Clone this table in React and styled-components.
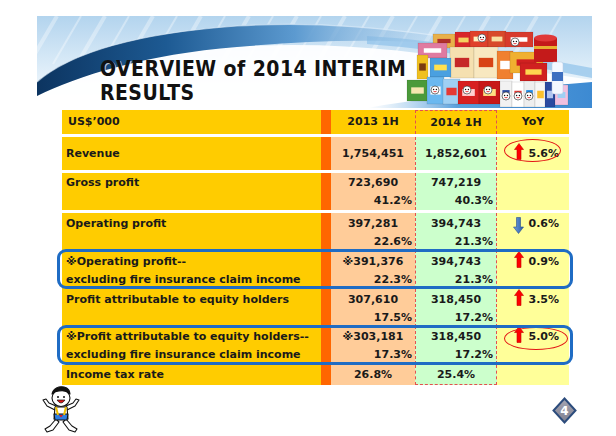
import styled, { createGlobalStyle } from "styled-components";

const GlobalStyle = createGlobalStyle`
  body {
    margin: 0;
    background: #fff;
  }
`;

const Slide = styled.div`
  width: 616px;
  height: 436px;
  box-sizing: border-box;
  padding-top: 16px;
  overflow: hidden;
`;

const Banner = styled.div`
  position: relative;
  margin-left: 37px;
  width: 555px;
  height: 92px;
`;

const BannerArt = styled.svg`
  position: absolute;
  inset: 0;
`;

const Title = styled.h1`
  position: relative;
  margin: 0;
  padding: 41px 0 0 63px;
  font: bold 21px/24px "DejaVu Sans Condensed", "DejaVu Sans", sans-serif;
  letter-spacing: 0.45px;
  color: #111;
  text-shadow: 1px 1px 0 rgba(255, 255, 255, 0.7);
`;

const Table = styled.div`
  display: flex;
  flex-direction: column;
  width: 507px;
  margin: 2px 0 0 62px;
  color: #1a1a1a;
  font: bold 11px/18px "DejaVu Sans", Verdana, sans-serif;
`;

const Row = styled.div`
  --pt: ${(p) => p.$pt}px;
  display: grid;
  grid-template-columns: 259px 10px 84px 82px 72px;
  height: ${(p) => p.$h}px;
  margin-top: ${(p) => p.$gap}px;
  position: ${(p) => (p.$boxed ? "relative" : "static")};

  ${(p) =>
    p.$boxed &&
    `
    &::after {
      content: "";
      position: absolute;
      top: -1px;
      bottom: -1px;
      left: -5px;
      right: -4px;
      border: 3px solid #1f6cc4;
      border-radius: 9px;
      z-index: 2;
      pointer-events: none;
    }
  `}
`;

const Label = styled.div`
  background: #ffcc00;
  padding: var(--pt) 0 0 ${(p) => (p.$head ? 6 : 4)}px;
  white-space: nowrap;
`;

const Stripe = styled.div`
  background: #ff6600;
`;

const HeadCell = styled.div`
  background: #ffcc00;
  padding-top: var(--pt);
  text-align: center;
  box-sizing: border-box;
  ${(p) =>
    p.$dashed &&
    `
    border: 1px dashed #e4504f;
    border-bottom: none;
  `}
`;

const Amount = styled.div`
  display: flex;
  flex-direction: column;
  box-sizing: border-box;
  padding-top: var(--pt);
  background: ${(p) => (p.$year === 2014 ? "#ccffcc" : "#ffcc99")};
  ${(p) =>
    p.$year === 2014 &&
    `
    border-left: 1px dashed #e4504f;
    border-right: 1px dashed #e4504f;
  `}
  ${(p) => p.$last && `border-bottom: 1px dashed #e4504f;`}
`;

const Value = styled.span`
  text-align: center;
  white-space: nowrap;
`;

const Pct = styled.span`
  text-align: right;
  padding-right: 3px;
`;

const Change = styled.div`
  position: relative;
  background: #ffff99;
  padding-top: var(--pt);
`;

const ChangeLine = styled.div`
  display: flex;
  align-items: center;
  justify-content: flex-end;
  gap: 4px;
  height: 18px;
  padding-right: 10px;
`;

const Ring = styled.span`
  position: absolute;
  left: 7px;
  top: ${(p) => p.$top}px;
  width: ${(p) => p.$w}px;
  height: 23px;
  box-sizing: border-box;
  border: 1.5px solid #e31515;
  border-radius: 50%;
`;

const ArrowIcon = styled.svg`
  flex: none;
  margin-top: ${(p) => (p.$up ? -5 : 3)}px;
`;

const Footer = styled.div`
  display: flex;
  justify-content: space-between;
  align-items: flex-start;
  padding: 0 39px 0 41px;
`;

const Mascot = styled.svg`
  margin-top: 1px;
`;

const PageBadge = styled.svg`
  margin-top: 12px;
`;

const UpArrow = () => (
  <ArrowIcon $up width="10" height="17" viewBox="0 0 10 17">
    <polygon
      points="5,0.5 9.5,6.5 7,6.5 7,16.5 3,16.5 3,6.5 0.5,6.5"
      fill="#ff0000"
      stroke="#c40000"
      strokeWidth="0.6"
    />
  </ArrowIcon>
);

const DownArrow = () => (
  <ArrowIcon width="11" height="17" viewBox="0 0 11 17">
    <defs>
      <linearGradient id="downFill" x1="0" y1="0" x2="1" y2="0">
        <stop offset="0" stopColor="#6f9fe0" />
        <stop offset="1" stopColor="#2b5ca6" />
      </linearGradient>
    </defs>
    <polygon
      points="3.5,0.5 7.5,0.5 7.5,10 10.5,10 5.5,16.5 0.5,10 3.5,10"
      fill="url(#downFill)"
      stroke="#2a4f8a"
      strokeWidth="0.6"
    />
  </ArrowIcon>
);

const rows = [
  { label: "Revenue", h: 33, gap: 3, pt: 8, y13: ["1,754,451"], y14: ["1,852,601"], yoy: { dir: "up", v: "5.6%", ring: { w: 57, top: 2 } } },
  { label: "Gross profit", h: 37, gap: 3, pt: 1, y13: ["723,690", "41.2%"], y14: ["747,219", "40.3%"] },
  { label: "Operating profit", h: 36, gap: 3, pt: 2, y13: ["397,281", "22.6%"], y14: ["394,743", "21.3%"], yoy: { dir: "down", v: "0.6%" } },
  { label: ["※Operating profit--", "excluding fire insurance claim income"], h: 38, gap: 1, pt: 3, boxed: true, y13: ["※391,376", "22.3%"], y14: ["394,743", "21.3%"], yoy: { dir: "up", v: "0.9%" } },
  { label: "Profit attributable to equity holders", h: 36, gap: 1, pt: 2, y13: ["307,610", "17.5%"], y14: ["318,450", "17.2%"], yoy: { dir: "up", v: "3.5%" } },
  { label: ["※Profit attributable to equity holders--", "excluding fire insurance claim income"], h: 38, gap: 1, pt: 2, boxed: true, y13: ["※303,181", "17.3%"], y14: ["318,450", "17.2%"], yoy: { dir: "up", v: "5.0%", ring: { w: 64, top: 1 } } },
  { label: "Income tax rate", h: 20, gap: 1, pt: 1, y13: ["26.8%"], y14: ["25.4%"], last: true },
];

// packages in the product photo: x, y, w, h, colour, label colour
const products = [
  [396, 18, 22, 14, "#e8b04a", "#b0302a"],
  [418, 16, 17, 16, "#d8262a", "#f4d060"],
  [433, 15, 18, 16, "#e0402a", "#fff2c0"],
  [451, 15, 18, 16, "#d84a2a", "#f8e0a0"],
  [468, 16, 28, 15, "#d83a2c", "#ffffff"],
  [381, 27, 29, 15, "#e07aa0", "#ffffff"],
  [413, 31, 24, 31, "#f5e0b0", "#c62828"],
  [437, 31, 24, 31, "#f8e8c0", "#d84315"],
  [393, 42, 21, 19, "#4aa0e0", "#ffe14d"],
  [460, 35, 16, 28, "#f08030", "#ffffff"],
  [473, 36, 33, 21, "#f0b030", "#d02020"],
  [483, 47, 27, 18, "#d02020", "#ffd54f"],
  [380, 39, 11, 24, "#f0c020", "#7a3b10"],
  [370, 64, 21, 21, "#4a9a3a", "#f5e6b0"],
  [390, 61, 17, 27, "#6ab8f0", "#ffffff"],
  [406, 63, 17, 25, "#9fd0f4", "#e53935"],
  [421, 65, 21, 23, "#d82020", "#ffd0d0"],
  [442, 65, 21, 23, "#c81818", "#ffe082"],
  [463, 65, 12, 26, "#f2f2f2", "#2a4aa0"],
  [475, 66, 12, 25, "#ffffff", "#e53935"],
  [487, 65, 11, 26, "#eeeeee", "#1e88e5"],
  [498, 66, 11, 25, "#f6f6f6", "#fbc02d"],
  [508, 66, 10, 25, "#2a4aa0", "#b0c4f0"],
  [518, 69, 13, 20, "#f0c0e0", "#9fd0f4"],
];

const Products = () => (
  <g>
    {products.map(([x, y, w, h, c, l], i) => (
      <g key={i}>
        <rect x={x} y={y} width={w} height={h} fill={c} stroke="rgba(0,0,0,0.2)" strokeWidth="0.5" />
        <rect x={x + w * 0.2} y={y + h * 0.35} width={w * 0.6} height={h * 0.3} fill={l} />
      </g>
    ))}
    <rect x="497" y="22" width="23" height="24" fill="#c41a1a" />
    <rect x="497" y="30" width="23" height="3" fill="#e8b030" />
    <ellipse cx="508.5" cy="22" rx="11.5" ry="3.5" fill="#e03838" />
    <rect x="515" y="46" width="11" height="32" rx="2" fill="#f4f8ff" stroke="#b9c9e0" strokeWidth="0.5" />
    <rect x="515" y="56" width="11" height="9" fill="#3d6fc0" />
    {[[430, 74], [451, 74], [469, 80], [481, 80], [478, 26], [445, 22], [398, 74], [492, 80]].map(([cx, cy], i) => (
      <g key={i}>
        <circle cx={cx} cy={cy} r="4" fill="#fff" stroke="#222" strokeWidth="0.6" />
        <circle cx={cx - 1.4} cy={cy - 0.5} r="0.7" fill="#111" />
        <circle cx={cx + 1.4} cy={cy - 0.5} r="0.7" fill="#111" />
        <path d={`M${cx - 2} ${cy + 1.3} Q${cx} ${cy + 3.3} ${cx + 2} ${cy + 1.3}`} fill="#e02020" />
      </g>
    ))}
  </g>
);

const BannerBackground = () => (
  <BannerArt width="555" height="92" viewBox="0 0 555 92">
    <defs>
      <linearGradient id="sky" x1="0" y1="0" x2="0" y2="1">
        <stop offset="0" stopColor="#b3d4ee" />
        <stop offset="0.55" stopColor="#dcecf8" />
        <stop offset="1" stopColor="#ffffff" />
      </linearGradient>
      <linearGradient id="swoosh" x1="0" y1="0" x2="1" y2="0">
        <stop offset="0" stopColor="#0c3460" />
        <stop offset="0.3" stopColor="#1d5a93" />
        <stop offset="0.6" stopColor="#5c9ad0" />
        <stop offset="1" stopColor="#b6d6f0" stopOpacity="0" />
      </linearGradient>
      <linearGradient id="lowBand" x1="0" y1="0" x2="1" y2="0">
        <stop offset="0" stopColor="#9cc8ec" stopOpacity="0" />
        <stop offset="0.4" stopColor="#5aa0dc" />
        <stop offset="1" stopColor="#3d8ad2" />
      </linearGradient>
    </defs>
    <rect width="555" height="92" fill="url(#sky)" />
    {Array.from({ length: 22 }, (_, i) => (
      <line
        key={i}
        x1={20 + i * 24}
        y1="0"
        x2={-8 + i * 24}
        y2="48"
        stroke="#fff"
        strokeOpacity="0.35"
        strokeWidth={i % 2 ? 2 : 4}
      />
    ))}
    <path d="M0,80 C50,56 120,34 210,30 C300,26 380,34 460,50 L555,64 L555,92 L0,92 Z" fill="#fff" fillOpacity="0.92" />
    <path d="M330,20 C400,24 470,36 555,52 L555,62 C470,46 400,33 330,28 Z" fill="#8fc2ea" fillOpacity="0.7" />
    <path
      d="M0,66 C30,40 90,18 200,10 C280,5 350,12 430,24 L430,30 C350,22 280,24 200,31 C110,38 40,60 0,80 Z"
      fill="url(#swoosh)"
    />
    <path d="M0,66 C30,40 90,18 200,10 C280,5 350,12 430,24" fill="none" stroke="#e6f2fc" strokeOpacity="0.6" strokeWidth="1.2" />
    <path d="M330,92 C400,80 480,72 555,66 L555,92 Z" fill="url(#lowBand)" />
    <Products />
  </BannerArt>
);

const MascotFigure = () => (
  <Mascot width="40" height="48" viewBox="0 0 40 48">
    <g stroke="#111" strokeWidth="1.1" strokeLinejoin="round">
      <path d="M14,24 L6,20 L2,14 L5,13 L8,17 L15,20 Z" fill="#fff" />
      <path d="M26,24 L34,20 L38,14 L35,13 L32,17 L25,20 Z" fill="#fff" />
      <path d="M15,33 L9,40 L4,43 L6,46 L12,44 L18,36 Z" fill="#fff" />
      <path d="M25,33 L31,40 L36,43 L34,46 L28,44 L22,36 Z" fill="#fff" />
      <path d="M14,21 L26,21 L27,33 L13,33 Z" fill="#fff" />
      <path d="M13,28 L27,28 L26,34 L14,34 Z" fill="#2e7de0" />
      <ellipse cx="20" cy="12" rx="9" ry="8.5" fill="#fff" />
      <path d="M11,8 C12,2 18,0 23,1 C27,2 29,5 29,8 C26,5 22,4 18,5 C15,5 13,6 11,8 Z" fill="#111" />
    </g>
    <path d="M15,21 L17,29 M25,21 L23,29" stroke="#f0c000" strokeWidth="2" />
    <circle cx="17" cy="11" r="1" fill="#111" />
    <circle cx="23" cy="11" r="1" fill="#111" />
    <path d="M16,14 Q20,20 24,14 Z" fill="#e01818" stroke="#111" strokeWidth="0.7" />
    <path d="M18,29 L22,29 L20,31.5 Z" fill="#e01818" />
  </Mascot>
);

const Badge = ({ n }) => (
  <PageBadge width="25" height="27" viewBox="0 0 25 27">
    <defs>
      <linearGradient id="badgeFill" x1="0" y1="0" x2="0" y2="1">
        <stop offset="0" stopColor="#a6a6b2" />
        <stop offset="1" stopColor="#808090" />
      </linearGradient>
    </defs>
    <polygon points="12.5,1.5 23.5,13.5 12.5,25.5 1.5,13.5" fill="url(#badgeFill)" stroke="#2c4c7c" strokeWidth="2" />
    <text x="12.5" y="18" textAnchor="middle" fill="#fff" fontFamily="DejaVu Sans, sans-serif" fontWeight="bold" fontSize="12">
      {n}
    </text>
  </PageBadge>
);

const AmountCell = ({ year, lines, last }) => (
  <Amount $year={year} $last={last}>
    <Value>{lines[0]}</Value>
    {lines[1] && <Pct>{lines[1]}</Pct>}
  </Amount>
);

const App = () => (
  <>
    <GlobalStyle />
    <Slide>
      <Banner>
        <BannerBackground />
        <Title>
          OVERVIEW of 2014 INTERIM
          <br />
          RESULTS
        </Title>
      </Banner>

      <Table>
        <Row $h={24} $gap={0} $pt={3}>
          <Label $head>US$’000</Label>
          <Stripe />
          <HeadCell>2013 1H</HeadCell>
          <HeadCell $dashed>2014 1H</HeadCell>
          <HeadCell>YoY</HeadCell>
        </Row>

        {rows.map((r, i) => (
          <Row key={i} $h={r.h} $gap={r.gap} $pt={r.pt} $boxed={r.boxed}>
            <Label>
              {Array.isArray(r.label) ? (
                <>
                  {r.label[0]}
                  <br />
                  {r.label[1]}
                </>
              ) : (
                r.label
              )}
            </Label>
            <Stripe />
            <AmountCell year={2013} lines={r.y13} />
            <AmountCell year={2014} lines={r.y14} last={r.last} />
            <Change>
              {r.yoy && (
                <ChangeLine>
                  {r.yoy.dir === "up" ? <UpArrow /> : <DownArrow />}
                  {r.yoy.v}
                </ChangeLine>
              )}
              {r.yoy && r.yoy.ring && <Ring $w={r.yoy.ring.w} $top={r.yoy.ring.top} />}
            </Change>
          </Row>
        ))}
      </Table>

      <Footer>
        <MascotFigure />
        <Badge n={4} />
      </Footer>
    </Slide>
  </>
);

export default App;
